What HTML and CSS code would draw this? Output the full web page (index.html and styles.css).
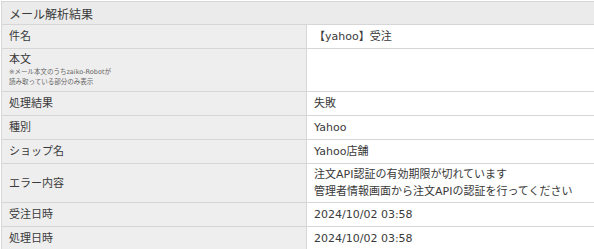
FILE: index.html
```html
<!DOCTYPE html>
<html lang="ja">
<head>
    <meta charset="UTF-8">
    <title>メール解析結果</title>
    <link rel="stylesheet" href="styles.css">
</head>
<body>
    <table class="result-table">
        <thead>
            <tr>
                <th colspan="2">メール解析結果</th>
            </tr>
        </thead>
        <tbody>
            <tr>
                <td class="label">件名</td>
                <td>【yahoo】受注</td>
            </tr>
            <tr class="body-row">
                <td class="label">
                    本文
                    <div class="note">※メール本文のうちzaiko-Robotが<br>読み取っている部分のみ表示</div>
                </td>
                <td></td>
            </tr>
            <tr>
                <td class="label">処理結果</td>
                <td>失敗</td>
            </tr>
            <tr>
                <td class="label">種別</td>
                <td>Yahoo</td>
            </tr>
            <tr>
                <td class="label">ショップ名</td>
                <td>Yahoo店舗</td>
            </tr>
            <tr class="error-row">
                <td class="label">エラー内容</td>
                <td>注文API認証の有効期限が切れています<br>管理者情報画面から注文APIの認証を行ってください</td>
            </tr>
            <tr>
                <td class="label">受注日時</td>
                <td>2024/10/02 03:58</td>
            </tr>
            <tr>
                <td class="label">処理日時</td>
                <td>2024/10/02 03:58</td>
            </tr>
        </tbody>
    </table>
</body>
</html>
```

FILE: styles.css
```css
body {
    font-family: "DejaVu Sans", "Noto Sans CJK JP", sans-serif;
    color: #3a3a3a;
    background: #fff;
    margin: 1px 0 0 1px;
    padding: 0;
}
.result-table {
    width: 600px;
    border-collapse: collapse;
    font-size: 11px;
}
.result-table th {
    background: #ebebeb;
    border: 1px solid #d6d6d6;
    font-size: 12px;
    font-weight: normal;
    text-align: left;
    height: 22px;
    padding: 0 7px;
}
.result-table td {
    border: 1px solid #d6d6d6;
    height: 23px;
    padding: 0 7px;
    line-height: 17px;
    vertical-align: middle;
}
.result-table td.label {
    width: 290px;
    background: #eeeeee;
}
.body-row td {
    height: 42px;
}
.body-row .label {
    line-height: 14px;
}
.note {
    font-size: 6.5px;
    line-height: 10px;
    color: #666;
}
.error-row td {
    height: 38px;
}
```
